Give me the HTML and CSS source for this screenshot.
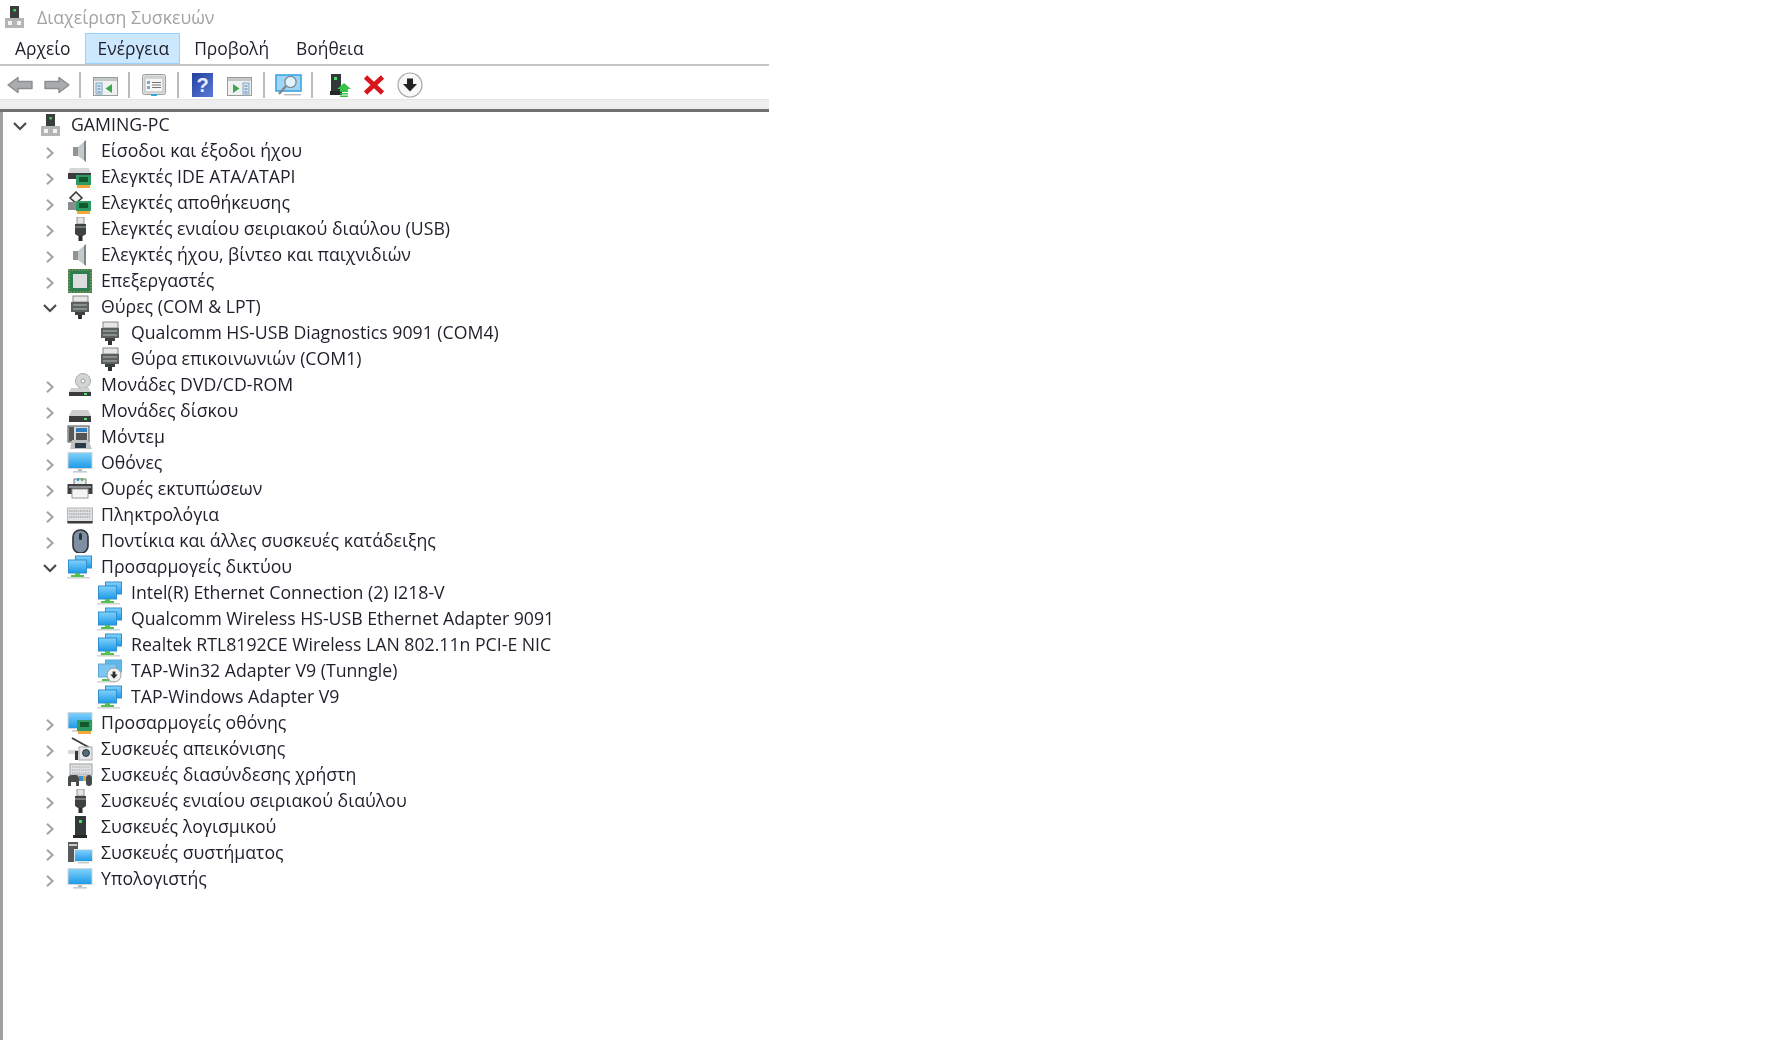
FILE: index.html
```html
<!DOCTYPE html>
<html lang="el">
<head>
  <meta charset="UTF-8" />
  <title>Διαχείριση Συσκευών</title>
  <link rel="stylesheet" href="styles.css">
</head>
<body>

<!-- icon sheet -->
<svg class="sheet" width="0" height="0">
  <defs>
    <linearGradient id="screen" x1="0" y1="0" x2="0" y2="1"><stop offset="0" stop-color="#7fd0fb"/><stop offset="1" stop-color="#1f9be8"/></linearGradient>
    <symbol id="pc" viewBox="0 0 24 24">
      <rect x="8" y="1" width="9" height="13" fill="#3a3f3d"/><rect x="11.5" y="4" width="2.4" height="2.4" fill="#3fdc5a"/>
      <rect x="3" y="13" width="19" height="10" fill="#b4b6b6"/><rect x="6" y="16" width="4" height="4" fill="#f4f4f4"/><rect x="15" y="16" width="4" height="4" fill="#f4f4f4"/>
    </symbol>
    <symbol id="speaker" viewBox="0 0 24 24">
      <rect x="5" y="8" width="6" height="9" fill="#8f9597"/><path d="M10 8 L18 1 V23 L10 17Z" fill="#c4c9cb"/><path d="M16 3 L18 1 V23 L16 21Z" fill="#7f8587"/>
    </symbol>
    <symbol id="ide" viewBox="0 0 26 24">
      <path d="M3 3 H22 L24 9 H1Z" fill="#d5d7d7"/><rect x="1" y="8" width="23" height="6" fill="#3a3c3d"/>
      <rect x="9" y="10" width="15" height="10" fill="#2f9a63"/><rect x="12" y="12" width="9" height="5" fill="#13592f"/><rect x="10" y="20" width="13" height="3" fill="#f2a838"/>
    </symbol>
    <symbol id="storage" viewBox="0 0 26 24">
      <path d="M9 1 L15 7 L9 12 L3 7Z" fill="#f0f0f0" stroke="#3a3c3d" stroke-width="1.6"/><path d="M1 11 H13 V19 H1Z" fill="#8a8d8e"/>
      <rect x="9" y="10" width="15" height="10" fill="#2f9a63"/><rect x="12" y="12" width="9" height="5" fill="#13592f"/><rect x="10" y="20" width="13" height="3" fill="#f2a838"/>
    </symbol>
    <symbol id="usb" viewBox="0 0 24 24">
      <rect x="9" y="0" width="7" height="7" fill="#e2e3e3" stroke="#909394"/><path d="M7 7 H18 V17 L15 19 H10 L7 17Z" fill="#3f4243"/><rect x="7" y="9" width="11" height="2" fill="#75797a"/><rect x="10.5" y="19" width="4" height="5" fill="#2b2d2e"/>
    </symbol>
    <symbol id="cpu" viewBox="0 0 24 24">
      <rect x="0" y="0" width="24" height="24" fill="#2c7d52"/><rect x="1" y="1" width="22" height="22" fill="none" stroke="#c9a34a" stroke-width="1.2" stroke-dasharray="1.5 1.5"/><rect x="5" y="5" width="14" height="14" fill="#dcdcdc"/>
    </symbol>
    <symbol id="port" viewBox="0 0 24 24">
      <rect x="5" y="1" width="15" height="6" fill="#e6e6e6" stroke="#85888a"/><rect x="3" y="7" width="18" height="10" fill="#5c6061"/><rect x="5" y="9" width="14" height="2" fill="#8a8e8f"/><rect x="5" y="13" width="14" height="2" fill="#8a8e8f"/><rect x="7" y="17" width="10" height="3" fill="#3d4041"/><rect x="10" y="20" width="4" height="4" fill="#2f3132"/>
    </symbol>
    <symbol id="dvd" viewBox="0 0 26 24">
      <circle cx="16" cy="8" r="7.5" fill="#d2d5d6" stroke="#a8abad"/><circle cx="16" cy="8" r="2" fill="#fff" stroke="#999"/>
      <path d="M4 15 H22 L24 19 H2Z" fill="#cdcfd0"/><rect x="2" y="19" width="22" height="4" fill="#3a3c3d"/><rect x="17" y="20" width="3" height="2" fill="#4ee06a"/>
    </symbol>
    <symbol id="disk" viewBox="0 0 26 24">
      <path d="M5 11 H21 L24 17 H2Z" fill="#cdcfd0"/><rect x="2" y="17" width="22" height="6" fill="#3a3c3d"/><rect x="17" y="19" width="3" height="2" fill="#4ee06a"/>
    </symbol>
    <symbol id="modem" viewBox="0 0 26 24">
      <rect x="1" y="1" width="21" height="16" fill="#d8dadb" stroke="#4a4d4e"/><rect x="2" y="2" width="5" height="14" fill="#55595a"/><rect x="9" y="3" width="11" height="4" fill="#2f7fc0"/><rect x="9" y="8" width="11" height="7" fill="#555"/>
      <path d="M5 15 H21 L25 24 H3Z" fill="#bfc1c2"/><rect x="8" y="18" width="11" height="5" fill="#2b3a48"/>
    </symbol>
    <symbol id="monitor" viewBox="0 0 26 24">
      <rect x="0.5" y="1" width="25" height="17" fill="#d4d7d8"/><rect x="1.5" y="2" width="23" height="15" fill="url(#screen)"/><rect x="11" y="18" width="4" height="2" fill="#b8bbbc"/><rect x="6" y="20" width="14" height="1.6" fill="#c7cacb"/>
    </symbol>
    <symbol id="printer" viewBox="0 0 26 24">
      <path d="M7 2 H19 V8 H7Z" fill="#e7e9ea" stroke="#777"/><rect x="10" y="1" width="2" height="3" fill="#2fa0d0"/><rect x="14" y="1" width="2" height="3" fill="#52b95f"/>
      <rect x="0.5" y="7" width="25" height="10" fill="#3e4142"/><rect x="5" y="12" width="16" height="9" fill="#f5f5f5" stroke="#999"/><rect x="2" y="9" width="22" height="2" fill="#8d9192"/>
    </symbol>
    <symbol id="keyboard" viewBox="0 0 26 24">
      <rect x="0.5" y="5" width="25" height="14" fill="#dfe1e2" stroke="#b5b7b8"/><path d="M2 8 H24 M2 11 H24 M2 14 H24" stroke="#a8abad" stroke-width="1.5" stroke-dasharray="1.4 .8"/><rect x="0.5" y="18" width="25" height="2.5" fill="#3a3c3d"/>
    </symbol>
    <symbol id="mouse" viewBox="0 0 24 24">
      <rect x="5" y="1" width="15" height="23" rx="7" fill="#7f8fa3" stroke="#2e3234" stroke-width="1.6"/><rect x="11" y="4" width="3" height="7" rx="1.5" fill="#2e3234"/>
    </symbol>
    <symbol id="net" viewBox="0 0 26 24">
      <rect x="8" y="0.5" width="17" height="13" fill="#2f8fd0"/><rect x="9" y="1.5" width="15" height="11" fill="url(#screen)"/>
      <rect x="1" y="4.5" width="19" height="14" fill="#2f8fd0"/><rect x="2" y="5.5" width="17" height="12" fill="url(#screen)"/>
      <path d="M8 18 H13 V20 H17 V22 H4 V20 H8Z" fill="#4fc24f"/><rect x="0" y="22" width="23" height="1.6" fill="#d4d6d6"/>
    </symbol>
    <symbol id="tap" viewBox="0 0 26 24">
      <rect x="8" y="0.5" width="17" height="13" fill="#5fa9d8"/><rect x="9" y="1.5" width="15" height="11" fill="#5db9ee"/>
      <rect x="1" y="4.5" width="19" height="14" fill="#5fa9d8"/><rect x="2" y="5.5" width="17" height="12" fill="#7cc6f1"/>
      <path d="M5 20 H12 V22 H5Z" fill="#4fc24f"/><rect x="0" y="22" width="15" height="1.6" fill="#d4d6d6"/>
      <circle cx="17" cy="16" r="7" fill="#f2f2f2" stroke="#9b9d9e"/><path d="M15.6 12.5 H18.4 V15.6 H20.6 L17 19.8 L13.4 15.6 H15.6Z" fill="#2b2b2b"/>
    </symbol>
    <symbol id="display" viewBox="0 0 26 24">
      <rect x="0.5" y="1" width="25" height="17" fill="#d4d7d8"/><rect x="1.5" y="2" width="23" height="15" fill="url(#screen)"/><rect x="5" y="19" width="8" height="1.6" fill="#c7cacb"/>
      <rect x="10" y="9" width="15" height="11" fill="#2f9a63"/><rect x="13" y="11" width="9" height="5" fill="#13592f"/><rect x="11" y="20" width="13" height="3" fill="#f2a838"/>
    </symbol>
    <symbol id="camera" viewBox="0 0 26 24">
      <path d="M5 1 L23 11" stroke="#3d4041" stroke-width="2"/><path d="M1 13 H13 V17 H1Z" fill="#d6d8d9"/><rect x="12" y="10" width="13" height="13" fill="#e4e6e7" stroke="#a9acad"/><rect x="8" y="14" width="3" height="9" fill="#34383a"/><circle cx="19" cy="16" r="3.4" fill="#4f6f7f" stroke="#2e3234"/>
    </symbol>
    <symbol id="hid" viewBox="0 0 26 24">
      <rect x="3" y="1" width="22" height="11" fill="#dfe1e2" stroke="#9ca0a1"/><path d="M5 4 H23 M5 7 H23 M5 10 H23" stroke="#a8abad" stroke-dasharray="1.4 .8"/>
      <path d="M1 23 V15 Q1 12 5 12 H9 Q12 12 12 16 V23 H9 V19 H4 V23Z" fill="#484c4d"/><rect x="12" y="13" width="5" height="5" fill="#3a8fd0"/><rect x="16" y="13" width="3" height="5" fill="#e7a33a"/><rect x="19" y="12" width="6" height="11" rx="3" fill="#454a4c"/>
    </symbol>
    <symbol id="software" viewBox="0 0 24 24">
      <rect x="7" y="1" width="11" height="19" fill="#33383a"/><rect x="11" y="5" width="3" height="3" fill="#45e062"/><rect x="5" y="20" width="14" height="3" fill="#24282a"/>
    </symbol>
    <symbol id="system" viewBox="0 0 26 24">
      <rect x="1" y="1" width="10" height="20" fill="#55595a"/><rect x="2" y="3" width="8" height="2" fill="#c8cbcc"/><rect x="7" y="8" width="19" height="13" fill="#e3e6e7"/><rect x="8" y="9" width="17" height="11" fill="url(#screen)"/><rect x="11" y="21" width="11" height="1.5" fill="#c7cacb"/>
    </symbol>

    <symbol id="t-back" viewBox="0 0 26 18"><path d="M1 9 L11 1.5 V5.5 H25 V12.5 H11 V16.5Z" fill="#a9abac" stroke="#8b8d8e" stroke-width="1.4" stroke-linejoin="round"/></symbol>
    <symbol id="t-forward" viewBox="0 0 26 18"><path d="M25 9 L15 1.5 V5.5 H1 V12.5 H15 V16.5Z" fill="#a9abac" stroke="#8b8d8e" stroke-width="1.4" stroke-linejoin="round"/></symbol>
    <symbol id="t-tree" viewBox="0 0 25 19">
      <rect x="0.5" y="0.5" width="24" height="18" fill="#f0f2f2" stroke="#9a9d9e"/><rect x="1" y="1" width="23" height="3" fill="#c4c7c8"/><rect x="3" y="6" width="6" height="11" fill="#d9e6f0" stroke="#7fa3c2"/><path d="M4.5 9 H7.5 M4.5 12 H7.5 M4.5 15 H7.5" stroke="#4f7fa8"/><path d="M19 7 V16 L12.5 11.5Z" fill="#3fa64f"/>
    </symbol>
    <symbol id="t-props" viewBox="0 0 24 22">
      <rect x="0.5" y="0.5" width="23" height="20" rx="2" fill="#dfe1e1" stroke="#9a9d9e"/><rect x="3" y="3" width="18" height="15" fill="#f6f6f6" stroke="#b4b6b7"/><rect x="3" y="3" width="18" height="2" fill="#d2d4d5"/><path d="M10 8.5 H19 M10 11 H19 M10 13.5 H19" stroke="#777"/><rect x="5" y="7" width="3" height="3" fill="#7fa9cc"/><rect x="5" y="12" width="3" height="3" fill="#7fa9cc"/><rect x="9" y="20" width="6" height="2" fill="#28a8d8"/>
    </symbol>
    <symbol id="t-panel" viewBox="0 0 25 19">
      <rect x="0.5" y="0.5" width="24" height="18" fill="#f0f2f2" stroke="#9a9d9e"/><rect x="1" y="1" width="23" height="3" fill="#c4c7c8"/><rect x="16" y="6" width="6" height="11" fill="#d9e6f0" stroke="#7fa3c2"/><path d="M17.5 9 H20.5 M17.5 12 H20.5 M17.5 15 H20.5" stroke="#4f7fa8"/><path d="M6 7 V16 L12.5 11.5Z" fill="#3fa64f"/>
    </symbol>
    <symbol id="t-scan" viewBox="0 0 27 22">
      <rect x="1" y="1" width="25" height="16" fill="#9fd6f5" stroke="#3aa6e6" stroke-width="1.6"/><circle cx="15.5" cy="8" r="5.6" fill="#e2f3fc" stroke="#7d8a92" stroke-width="1.3"/><path d="M11 12 L4 20" stroke="#7f8689" stroke-width="2.2"/><rect x="9" y="20" width="17" height="1.4" fill="#b4b8ba"/>
    </symbol>
    <symbol id="t-update" viewBox="0 0 21 24">
      <rect x="1" y="1" width="10" height="17" fill="#33383a"/><rect x="4" y="4" width="3" height="3" fill="#45e062"/><rect x="0" y="18" width="12" height="4" fill="#24282a"/><path d="M14 10 L21 16 H18 V19 H10 V16 H7Z" fill="#38c24a"/><rect x="10" y="20" width="8" height="1.5" fill="#38c24a"/><rect x="10" y="22.5" width="8" height="1.5" fill="#38c24a"/>
    </symbol>
    <symbol id="t-remove" viewBox="0 0 22 20"><path d="M2.5 2 L19.5 18 M19.5 2 L2.5 18" stroke="#d8141c" stroke-width="4.6"/></symbol>
    <symbol id="t-disable" viewBox="0 0 26 26">
      <circle cx="13" cy="13" r="12" fill="#f8f8f8" stroke="#a5a7a8" stroke-width="1.2"/><path d="M10 6.5 H16 V12 H20 L13 19.5 L6 12 H10Z" fill="#222"/>
    </symbol>
  </defs>
</svg>

<div class="chrome">
  <div class="titlebar">
    <svg class="title-icon"><use href="#pc"/></svg>
    <span>Διαχείριση Συσκευών</span>
  </div>

  <nav class="menubar">
    <a class="menu-item">Αρχείο</a>
    <a class="menu-item active">Ενέργεια</a>
    <a class="menu-item">Προβολή</a>
    <a class="menu-item">Βοήθεια</a>
  </nav>

  <div class="toolbar">
    <svg class="tool tool-back"><use href="#t-back"/></svg>
    <svg class="tool tool-forward"><use href="#t-forward"/></svg>
    <i class="sep sep-a"></i>
    <svg class="tool tool-tree"><use href="#t-tree"/></svg>
    <i class="sep sep-b"></i>
    <svg class="tool tool-props"><use href="#t-props"/></svg>
    <i class="sep sep-c"></i>
    <span class="tool-help">?</span>
    <svg class="tool tool-panel"><use href="#t-panel"/></svg>
    <i class="sep sep-d"></i>
    <svg class="tool tool-scan"><use href="#t-scan"/></svg>
    <i class="sep sep-e"></i>
    <svg class="tool tool-update"><use href="#t-update"/></svg>
    <svg class="tool tool-remove"><use href="#t-remove"/></svg>
    <svg class="tool tool-disable"><use href="#t-disable"/></svg>
  </div>

  <div class="band"></div>
</div>

<ul class="tree" id="tree"></ul>

<script src="tree.js"></script>
</body>
</html>
```

FILE: styles.css
```css
* { box-sizing: border-box; }
html, body { height: 100%; }
body {
  margin: 0;
  background-color: #fff;
  color: #1f1f2a;
  font-family: "Open Sans", "Noto Sans", sans-serif;
  font-size: 17.7px;
  overflow: hidden;
}
.sheet { display: block; }

/* the reference is an upscaled capture, everything is a little soft */
.chrome, .tree { filter: blur(0.45px); }

.chrome { width: 769px; }

.titlebar {
  height: 31px;
  padding: 2px 0 0 2px;
  display: flex;
  align-items: center;
  gap: 11px;
  color: #a3a3a3;
}
.title-icon { width: 24px; height: 24px; }

.menubar {
  height: 35px;
  display: flex;
  align-items: center;
  padding: 0 2px;
  border-bottom: 2px solid #c3c5c6;
}
.menu-item {
  height: 31px;
  margin: 2px 1px 0 0;
  padding: 0 12px;
  font-size: 17.4px;
  line-height: 29px;
  border: 1px solid transparent;
}
.menu-item.active {
  padding-right: 10px;
  background-color: #cce8ff;
  border-color: #99d1ff;
}

.toolbar {
  height: 33px;
  display: flex;
  align-items: center;
  padding: 4px 0 0 7px;
}
.tool { display: block; flex: none; }
.tool-back { width: 26px; height: 18px; margin-right: 11px; }
.tool-forward { width: 26px; height: 18px; }
.tool-tree, .tool-panel { width: 25px; height: 19px; margin-top: 3px; }
.tool-props { width: 24px; height: 22px; }
.tool-scan { width: 27px; height: 22px; }
.tool-update { width: 21px; height: 24px; }
.tool-remove { width: 22px; height: 20px; margin-left: 12px; }
.tool-disable { width: 26px; height: 26px; margin-left: 12px; }
.tool-help {
  width: 21px;
  height: 24px;
  margin-right: 14px;
  background: linear-gradient(135deg, #24409f, #5b7ad8);
  color: #e8ecff;
  font-family: "Liberation Sans", sans-serif;
  font-size: 20px;
  font-weight: bold;
  line-height: 24px;
  text-align: center;
}
.sep {
  width: 2px;
  height: 26px;
  background-color: #b9bbbc;
  flex: none;
}
.sep-a { margin: 0 12px 0 9px; }
.sep-b { margin: 0 12px 0 10px; }
.sep-c { margin: 0 13px 0 11px; }
.sep-d { margin: 0 10px 0 11px; }
.sep-e { margin: 0 17px 0 9px; }

.band {
  height: 13px;
  background-color: #efefef;
  border-top: 1px solid #e4e4e4;
  border-bottom: 3px solid #6f7172;
}

.tree {
  list-style: none;
  margin: 0;
  padding: 0;
  height: calc(100% - 112px);
  border-left: 3px solid #a0a0a0;
}
.row {
  height: 26px;
  display: flex;
  align-items: center;
}
.chevron { width: 20px; height: 12px; margin: 4px 7px 0 0; flex: none; }
.chevron.closed { stroke: #a6a6a6; }
.chevron.open { stroke: #4a4a4a; }
.node-icon { width: 26px; height: 24px; margin-right: 8px; flex: none; }
.label { white-space: nowrap; padding-bottom: 3px; }

.level-0 { padding-left: 7px; }
.level-1 { padding-left: 37px; }
.level-2 { padding-left: 67px; }
```

FILE: tree.js
```js
const rows = [
  [0, 'open', 'pc', 'GAMING-PC'],
  [1, 'closed', 'speaker', 'Είσοδοι και έξοδοι ήχου'],
  [1, 'closed', 'ide', 'Ελεγκτές IDE ATA/ATAPI'],
  [1, 'closed', 'storage', 'Ελεγκτές αποθήκευσης'],
  [1, 'closed', 'usb', 'Ελεγκτές ενιαίου σειριακού διαύλου (USB)'],
  [1, 'closed', 'speaker', 'Ελεγκτές ήχου, βίντεο και παιχνιδιών'],
  [1, 'closed', 'cpu', 'Επεξεργαστές'],
  [1, 'open', 'port', 'Θύρες (COM & LPT)'],
  [2, '', 'port', 'Qualcomm HS-USB Diagnostics 9091 (COM4)'],
  [2, '', 'port', 'Θύρα επικοινωνιών (COM1)'],
  [1, 'closed', 'dvd', 'Μονάδες DVD/CD-ROM'],
  [1, 'closed', 'disk', 'Μονάδες δίσκου'],
  [1, 'closed', 'modem', 'Μόντεμ'],
  [1, 'closed', 'monitor', 'Οθόνες'],
  [1, 'closed', 'printer', 'Ουρές εκτυπώσεων'],
  [1, 'closed', 'keyboard', 'Πληκτρολόγια'],
  [1, 'closed', 'mouse', 'Ποντίκια και άλλες συσκευές κατάδειξης'],
  [1, 'open', 'net', 'Προσαρμογείς δικτύου'],
  [2, '', 'net', 'Intel(R) Ethernet Connection (2) I218-V'],
  [2, '', 'net', 'Qualcomm Wireless HS-USB Ethernet Adapter 9091'],
  [2, '', 'net', 'Realtek RTL8192CE Wireless LAN 802.11n PCI-E NIC'],
  [2, '', 'tap', 'TAP-Win32 Adapter V9 (Tunngle)'],
  [2, '', 'net', 'TAP-Windows Adapter V9'],
  [1, 'closed', 'display', 'Προσαρμογείς οθόνης'],
  [1, 'closed', 'camera', 'Συσκευές απεικόνισης'],
  [1, 'closed', 'hid', 'Συσκευές διασύνδεσης χρήστη'],
  [1, 'closed', 'usb', 'Συσκευές ενιαίου σειριακού διαύλου'],
  [1, 'closed', 'software', 'Συσκευές λογισμικού'],
  [1, 'closed', 'system', 'Συσκευές συστήματος'],
  [1, 'closed', 'monitor', 'Υπολογιστής'],
];

const chevrons = {
  open: '<path d="M4 2 L10 8 L16 2" fill="none" stroke-width="2.2"/>',
  closed: '<path d="M7 0.8 L12.5 6 L7 11.2" fill="none" stroke-width="2.2"/>',
  '': '',
};

document.getElementById('tree').innerHTML = rows.map(([level, state, icon, text]) => `
  <li class="row level-${level}">
    <svg class="chevron ${state}" viewBox="0 0 20 12">${chevrons[state]}</svg>
    <svg class="node-icon"><use href="#${icon}"/></svg>
    <span class="label">${text.replace('&', '&amp;')}</span>
  </li>`).join('');
```
